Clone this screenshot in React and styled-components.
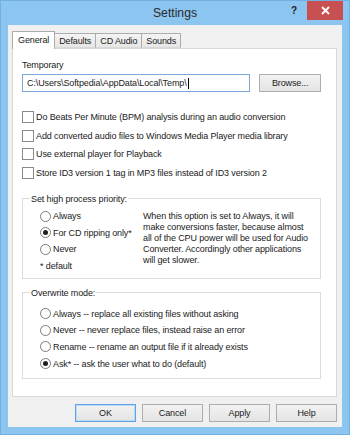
import React from 'react';
import styled, { createGlobalStyle } from 'styled-components';

const GlobalStyle = createGlobalStyle`
  html, body {
    margin: 0;
    padding: 0;
  }

  body {
    width: 350px;
    height: 435px;
    overflow: hidden;
    font-family: "Liberation Sans", Arial, sans-serif;
    letter-spacing: -0.12px;
    color: #1a1a1a;
  }
`;

const Window = styled.div`
  box-sizing: border-box;
  width: 350px;
  height: 435px;
  display: flex;
  flex-direction: column;
  background: #8dc5f1;
  border: 1px solid #74afe2;
`;

const TitleBar = styled.div`
  height: 24px;
  display: grid;
  grid-template-columns: 1fr auto 1fr;
  align-items: start;
`;

const Title = styled.div`
  grid-column: 2;
  font-size: 12.2px;
  letter-spacing: 0;
  line-height: 24px;
  color: #2b2b2b;
`;

const Controls = styled.div`
  grid-column: 3;
  justify-self: end;
  display: flex;
  align-items: flex-start;
  padding-right: 6px;
`;

const HelpGlyph = styled.div`
  width: 26px;
  text-align: center;
  font-size: 10px;
  font-weight: bold;
  line-height: 19px;
  color: #1e1e1e;
`;

const CloseButton = styled.div`
  width: 36px;
  height: 19px;
  display: flex;
  align-items: center;
  justify-content: center;
  background: #c75050;
`;

const Client = styled.div`
  flex: 1;
  margin: 0 7px 7px;
  padding: 6px 5px 5px 4px;
  display: flex;
  flex-direction: column;
  background: #f0f0f0;
`;

const TabStrip = styled.div`
  height: 17px;
  display: flex;
  align-items: flex-end;
  position: relative;
  z-index: 1;
`;

const Tab = styled.div`
  box-sizing: border-box;
  height: ${(p) => (p.$active ? '18px' : '15px')};
  margin-bottom: ${(p) => (p.$active ? '-1px' : '0')};
  margin-left: ${(p) => (p.$first ? '0' : '-1px')};
  padding: 0 ${(p) => (p.$active ? '5px' : '4px')};
  font-size: 9px;
  line-height: ${(p) => (p.$active ? '16px' : '14px')};
  border: 1px solid #acacac;
  border-bottom: ${(p) => (p.$active ? 'none' : '1px solid #d9d9d9')};
  background: ${(p) =>
    p.$active ? '#ffffff' : 'linear-gradient(#f4f4f4, #e6e6e6)'};
`;

const Panel = styled.div`
  box-sizing: border-box;
  flex: 1;
  padding: 10px 15px 0 9px;
  display: flex;
  flex-direction: column;
  background: #ffffff;
  border: 1px solid #d9d9d9;
`;

const FieldLabel = styled.div`
  font-size: 9px;
  line-height: 12px;
`;

const PathRow = styled.div`
  margin-top: 3px;
  display: flex;
  gap: 9px;
`;

const TextField = styled.div`
  box-sizing: border-box;
  width: 229px;
  height: 18px;
  padding-left: 4px;
  display: flex;
  align-items: center;
  font-size: 9px;
  background: #ffffff;
  border: 1px solid #7ba8d8;
`;

const Caret = styled.span`
  width: 1px;
  height: 11px;
  margin-left: 1px;
  background: #000000;
`;

const Button = styled.div`
  box-sizing: border-box;
  width: ${(p) => p.$width || 61}px;
  height: 18px;
  display: flex;
  align-items: center;
  justify-content: center;
  font-size: 9px;
  background: linear-gradient(#f2f2f2, #e4e4e4);
  border: 1px solid ${(p) => (p.$default ? '#5fa3e6' : '#adadad')};
  box-shadow: ${(p) => (p.$default ? 'inset 0 0 0 1px #b9dcfa' : 'none')};
`;

const CheckList = styled.div`
  margin-top: 15.75px;
  display: flex;
  flex-direction: column;
`;

const CheckRow = styled.div`
  height: 18.5px;
  display: flex;
  align-items: center;
  gap: 2px;
  font-size: 9px;
`;

const Box = styled.span`
  box-sizing: border-box;
  width: 12px;
  height: 12px;
  background: #ffffff;
  border: 1px solid #8a8a8a;
`;

const Group = styled.fieldset`
  box-sizing: border-box;
  margin: ${(p) => p.$gap}px 0 0;
  height: ${(p) => p.$height}px;
  padding: ${(p) => p.$pad};
  border: 1px solid #dcdcdc;
  font-size: 9px;
`;

const Legend = styled.legend`
  margin-left: -10px;
  padding: 0 1px;
  font-size: 9px;
  line-height: 12px;
`;

const PriorityBody = styled.div`
  display: flex;
`;

const RadioColumn = styled.div`
  width: 103px;
  display: flex;
  flex-direction: column;
`;

const RadioRow = styled.div`
  height: ${(p) => p.$h}px;
  display: flex;
  align-items: center;
  gap: 2px;
`;

const Circle = styled.span`
  box-sizing: border-box;
  width: 11px;
  height: 11px;
  display: flex;
  align-items: center;
  justify-content: center;
  border-radius: 50%;
  background: #ffffff;
  border: 1px solid #7a7a7a;

  &::after {
    content: '';
    width: 5px;
    height: 5px;
    border-radius: 50%;
    background: ${(p) => (p.$checked ? '#1f1f1f' : 'transparent')};
  }
`;

const Note = styled.div`
  height: 16.5px;
  display: flex;
  align-items: center;
`;

const Description = styled.div`
  padding-top: 3px;
  line-height: 11px;
  white-space: nowrap;
`;

const ButtonRow = styled.div`
  margin-top: 7px;
  display: flex;
  justify-content: flex-end;
  gap: 6px;
`;

const checks = [
  'Do Beats Per Minute (BPM) analysis during an audio conversion',
  'Add converted audio files to Windows Media Player media library',
  'Use external player for Playback',
  'Store ID3 version 1 tag in MP3 files instead of ID3 version 2',
];

const description = [
  'When this option is set to Always, it will',
  'make conversions faster, because almost',
  'all of the CPU power will be used for Audio',
  'Converter. Accordingly other applications',
  'will get slower.',
];

const overwrite = [
  ['Always -- replace all existing files without asking', false],
  ['Never -- never replace files, instead raise an error', false],
  ['Rename -- rename an output file if it already exists', false],
  ['Ask* -- ask the user what to do (default)', true],
];

const Radio = ({ label, checked, h }) => (
  <RadioRow $h={h}>
    <Circle $checked={checked} />
    <span>{label}</span>
  </RadioRow>
);

const App = () => (
  <Window>
    <GlobalStyle />
    <TitleBar>
      <Title>Settings</Title>
      <Controls>
        <HelpGlyph>?</HelpGlyph>
        <CloseButton>
          <svg width="9" height="9" viewBox="0 0 9 9">
            <path d="M1 1L8 8M8 1L1 8" stroke="#ffffff" strokeWidth="1.8" />
          </svg>
        </CloseButton>
      </Controls>
    </TitleBar>

    <Client>
      <TabStrip>
        <Tab $active $first>General</Tab>
        <Tab>Defaults</Tab>
        <Tab>CD Audio</Tab>
        <Tab>Sounds</Tab>
      </TabStrip>

      <Panel>
        <FieldLabel>Temporary</FieldLabel>
        <PathRow>
          <TextField>
            C:\Users\Softpedia\AppData\Local\Temp\
            <Caret />
          </TextField>
          <Button $width={62}>Browse...</Button>
        </PathRow>

        <CheckList>
          {checks.map((c) => (
            <CheckRow key={c}>
              <Box />
              <span>{c}</span>
            </CheckRow>
          ))}
        </CheckList>

        <Group $gap={11} $height={86} $pad="3px 0 0 17px">
          <Legend>Set high process priority:</Legend>
          <PriorityBody>
            <RadioColumn>
              <Radio label="Always" h={16.5} />
              <Radio label="For CD ripping only*" h={16.5} checked />
              <Radio label="Never" h={16.5} />
              <Note>* default</Note>
            </RadioColumn>
            <Description>
              {description.map((line) => (
                <div key={line}>{line}</div>
              ))}
            </Description>
          </PriorityBody>
        </Group>

        <Group $gap={8} $height={92} $pad="6.5px 0 0 17px">
          <Legend>Overwrite mode:</Legend>
          {overwrite.map(([label, checked]) => (
            <Radio key={label} label={label} checked={checked} h={16.7} />
          ))}
        </Group>
      </Panel>

      <ButtonRow>
        <Button $default>OK</Button>
        <Button>Cancel</Button>
        <Button>Apply</Button>
        <Button>Help</Button>
      </ButtonRow>
    </Client>
  </Window>
);

export default App;
